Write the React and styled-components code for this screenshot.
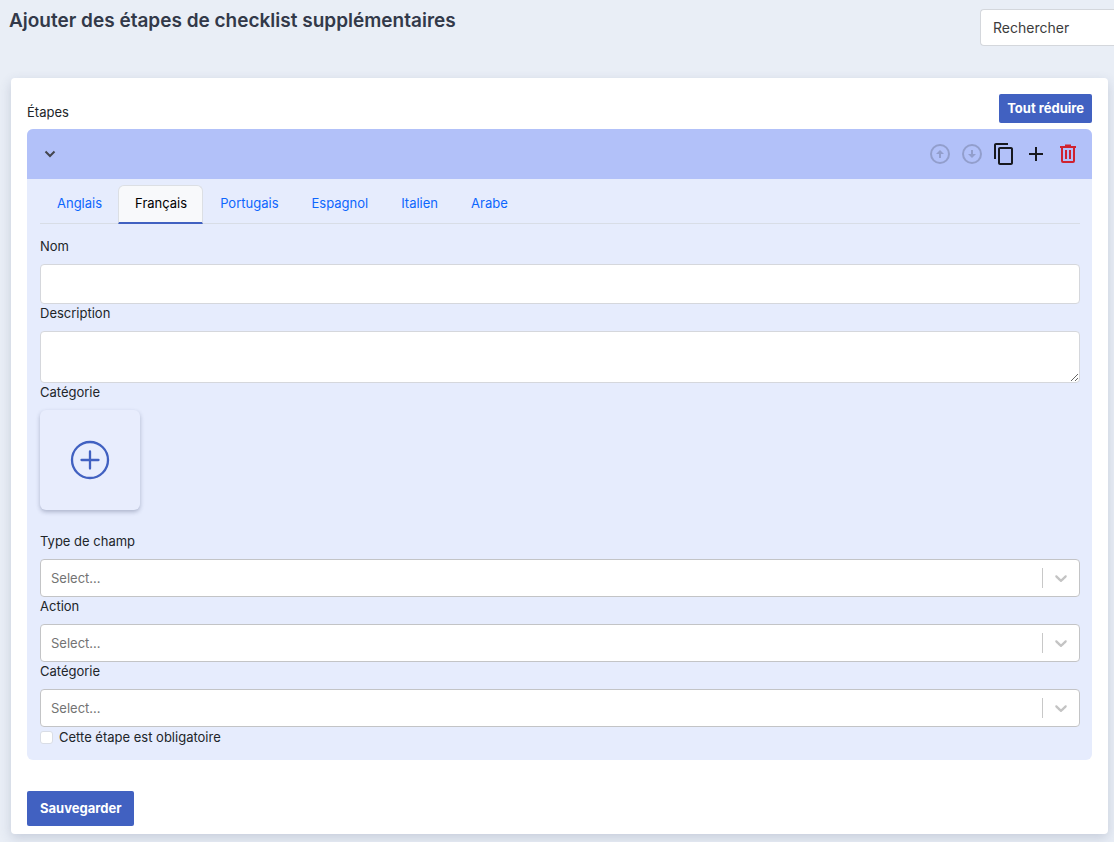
import React, { useState } from "react";
import styled, { createGlobalStyle } from "styled-components";
import { MdAdd, MdContentCopy } from "react-icons/md";

const GlobalStyle = createGlobalStyle`
  *, *::before, *::after { box-sizing: border-box; }
  body {
    margin: 0;
    background: #e9eef6;
    color: #212529;
    font-family: Inter, "Liberation Sans", sans-serif;
    font-size: 13px;
    line-height: 19px;
  }
  button, input, textarea, select { font: inherit; color: inherit; }
`;

const Page = styled.div`
  padding-bottom: 8px;
`;

const TopBar = styled.header`
  display: flex;
  justify-content: space-between;
  align-items: flex-start;
  gap: 24px;
  padding: 9px 0 0 9px;
`;

const Title = styled.h1`
  margin: 0;
  font-size: 19px;
  line-height: 24px;
  font-weight: 600;
  color: #323949;
`;

const Search = styled.input`
  width: 134px;
  height: 37px;
  padding: 0 12px;
  border: 1px solid #d4d7dc;
  border-right: 0;
  border-radius: 4px 0 0 4px;
  background: #fff;
  font-size: 14px;
  &::placeholder { color: #3c3c3c; opacity: 1; }
`;

const Card = styled.main`
  margin: 32px 6px 0 11px;
  padding: 16px 16px 8px;
  border-radius: 4px;
  background: #fff;
  box-shadow: 0 4px 12px rgba(60, 75, 110, 0.2);
`;

const CardHead = styled.div`
  display: flex;
  justify-content: space-between;
  align-items: center;
  margin-bottom: 6px;
`;

const SectionTitle = styled.h2`
  margin: 8px 0 0;
  font-size: 13px;
  line-height: 19px;
  font-weight: 400;
`;

const PrimaryButton = styled.button`
  height: ${(p) => (p.$small ? 29 : 35)}px;
  padding: 0 ${(p) => (p.$small ? 8 : 13)}px;
  border: 0;
  border-radius: 2px;
  background: #4161c1;
  color: #fff;
  font-weight: 700;
  cursor: pointer;
`;

const Step = styled.section`
  margin-bottom: 31px;
  border-radius: 6px;
  background: #e6ecfd;
  overflow: hidden;
`;

const StepHead = styled.div`
  display: flex;
  justify-content: space-between;
  align-items: center;
  height: 50px;
  padding: 0 12px 0 11px;
  background: #b2c1f9;
`;

const Actions = styled.div`
  display: flex;
  gap: 8px;
`;

const IconButton = styled.button`
  display: flex;
  padding: 0;
  border: 0;
  background: none;
  color: ${(p) => p.$color || "#17191f"};
  &:disabled { opacity: 0.2; }
`;

const StepBody = styled.div`
  padding: 6px 12px 12px 13px;
`;

const Tabs = styled.div`
  display: flex;
  margin-bottom: 13px;
  border-bottom: 1px solid #d8dde6;
`;

const Tab = styled.button`
  height: 39px;
  margin-bottom: -1px;
  padding: 0 15px 1px 16px;
  border: 1px solid ${(p) => (p.$active ? "#dcdfe4" : "transparent")};
  border-bottom: 2px solid ${(p) => (p.$active ? "#4161c1" : "transparent")};
  border-radius: 6px 6px 0 0;
  background: ${(p) => (p.$active ? "#f8f9fb" : "none")};
  color: ${(p) => (p.$active ? "#000" : "#0d66fd")};
`;

const Field = styled.div`
  display: flex;
  flex-direction: column;
  align-items: stretch;
`;

const Label = styled.label`
  margin-bottom: 8px;
`;

const TextInput = styled.input`
  height: 40px;
  padding: 0 12px;
  border: 1px solid #d5d7dc;
  border-radius: 4px;
  background: #fff;
`;

const TextArea = styled.textarea`
  height: 52px;
  padding: 6px 12px;
  border: 1px solid #d5d7dc;
  border-radius: 4px;
  background: #fff;
  resize: vertical;
`;

const Tile = styled.button`
  display: flex;
  align-items: center;
  justify-content: center;
  width: 100px;
  height: 100px;
  margin-bottom: 22px;
  border: 0;
  border-radius: 6px;
  background: #e8edfd;
  color: #4161c1;
  box-shadow: 0 2px 4px rgba(40, 50, 90, 0.3);
`;

const SelectBox = styled.div`
  display: grid;
  align-items: center;
  height: 38px;
  border: 1px solid #c3c4c6;
  border-radius: 4px;
  background: #fff;
  > * { grid-area: 1 / 1; }
`;

const NativeSelect = styled.select`
  width: 100%;
  height: 36px;
  padding: 0 48px 0 10px;
  border: 0;
  appearance: none;
  background: none;
  color: #737373;
`;

const Indicator = styled.span`
  display: flex;
  align-items: center;
  justify-content: center;
  justify-self: end;
  width: 37px;
  height: 20px;
  border-left: 1px solid #c8c8c8;
  color: #c4c4c4;
  pointer-events: none;
`;

const CheckRow = styled.label`
  display: flex;
  align-items: center;
  gap: 6px;
  line-height: 21px;
`;

const Check = styled.input`
  appearance: none;
  width: 13px;
  height: 13px;
  margin: 0;
  border: 1px solid #d9dde6;
  border-radius: 3px;
  background: #fff;
  &:checked { background: #4161c1; }
`;

const Chevron = ({ size }) => (
  <svg width={size} height={size} viewBox="0 0 20 20" fill="currentColor" aria-hidden="true">
    <path d="M4.516 7.548c0.436-0.446 1.043-0.481 1.576 0l3.908 3.747 3.908-3.747c0.533-0.481 1.141-0.446 1.574 0 0.436 0.445 0.408 1.197 0 1.615-0.406 0.418-4.695 4.502-4.695 4.502-0.217 0.223-0.502 0.335-0.787 0.335s-0.57-0.112-0.789-0.335c0 0-4.287-4.084-4.695-4.502s-0.436-1.17 0-1.615z" />
  </svg>
);

const StepChevron = () => (
  <svg width="24" height="24" viewBox="0 0 24 24" fill="none" stroke="#43464f" strokeWidth="2" aria-hidden="true">
    <path d="M7.5 9.5 12 14l4.500-4.500" />
  </svg>
);

const CircleArrow = ({ down }) => (
  <svg width="24" height="24" viewBox="0 0 24 24" aria-hidden="true">
    <circle cx="12" cy="12" r="9" fill="none" stroke="currentColor" strokeWidth="2" />
    <path
      d={down ? "M8 12h3V8h2v4h3l-4 4z" : "M8 12h3v4h2v-4h3l-4-4z"}
      fill="currentColor"
    />
  </svg>
);

const Trash = () => (
  <svg width="24" height="24" viewBox="0 0 24 24" fill="none" stroke="currentColor" strokeWidth="2" aria-hidden="true">
    <path d="M4 5h16M9 3.500h6M6 5v14q0 1 1 1h10q1 0 1-1V5M10 8v9M14 8v9" />
  </svg>
);

const PlusCircle = () => (
  <svg width="40" height="40" viewBox="0 0 40 40" fill="none" stroke="currentColor" strokeWidth="2.300" strokeLinecap="round" aria-hidden="true">
    <circle cx="20" cy="20" r="18" />
    <path d="M20 11.500v17M11.500 20h17" />
  </svg>
);

function SelectField({ id, label }) {
  return (
    <Field>
      <Label htmlFor={id}>{label}</Label>
      <SelectBox>
        <NativeSelect id={id} defaultValue="">
          <option value="">Select...</option>
        </NativeSelect>
        <Indicator>
          <Chevron size={20} />
        </Indicator>
      </SelectBox>
    </Field>
  );
}

const languages = ["Anglais", "Français", "Portugais", "Espagnol", "Italien", "Arabe"];

export default function App() {
  const [language, setLanguage] = useState("Français");
  return (
    <Page>
      <GlobalStyle />
      <TopBar>
        <Title>Ajouter des étapes de checklist supplémentaires</Title>
        <Search type="text" placeholder="Rechercher" aria-label="Rechercher" />
      </TopBar>
      <Card>
        <CardHead>
          <SectionTitle>Étapes</SectionTitle>
          <PrimaryButton type="button" $small>Tout réduire</PrimaryButton>
        </CardHead>
        <Step>
          <StepHead>
            <IconButton type="button" aria-label="Réduire"><StepChevron /></IconButton>
            <Actions>
              <IconButton type="button" aria-label="Monter" disabled><CircleArrow /></IconButton>
              <IconButton type="button" aria-label="Descendre" disabled><CircleArrow down /></IconButton>
              <IconButton type="button" aria-label="Dupliquer"><MdContentCopy size={24} /></IconButton>
              <IconButton type="button" aria-label="Ajouter"><MdAdd size={24} /></IconButton>
              <IconButton type="button" aria-label="Supprimer" $color="#cf2230"><Trash /></IconButton>
            </Actions>
          </StepHead>
          <StepBody>
            <Tabs role="tablist">
              {languages.map((name) => (
                <Tab
                  key={name}
                  type="button"
                  role="tab"
                  aria-selected={name === language}
                  $active={name === language}
                  onClick={() => setLanguage(name)}
                >
                  {name}
                </Tab>
              ))}
            </Tabs>
            <Field>
              <Label htmlFor="name">Nom</Label>
              <TextInput id="name" type="text" />
            </Field>
            <Field>
              <Label htmlFor="description">Description</Label>
              <TextArea id="description" />
            </Field>
            <Field>
              <Label htmlFor="category-tile">Catégorie</Label>
              <Tile id="category-tile" type="button"><PlusCircle /></Tile>
            </Field>
            <SelectField id="field-type" label="Type de champ" />
            <SelectField id="action" label="Action" />
            <SelectField id="category" label="Catégorie" />
            <CheckRow>
              <Check type="checkbox" />
              Cette étape est obligatoire
            </CheckRow>
          </StepBody>
        </Step>
        <PrimaryButton type="button">Sauvegarder</PrimaryButton>
      </Card>
    </Page>
  );
}
